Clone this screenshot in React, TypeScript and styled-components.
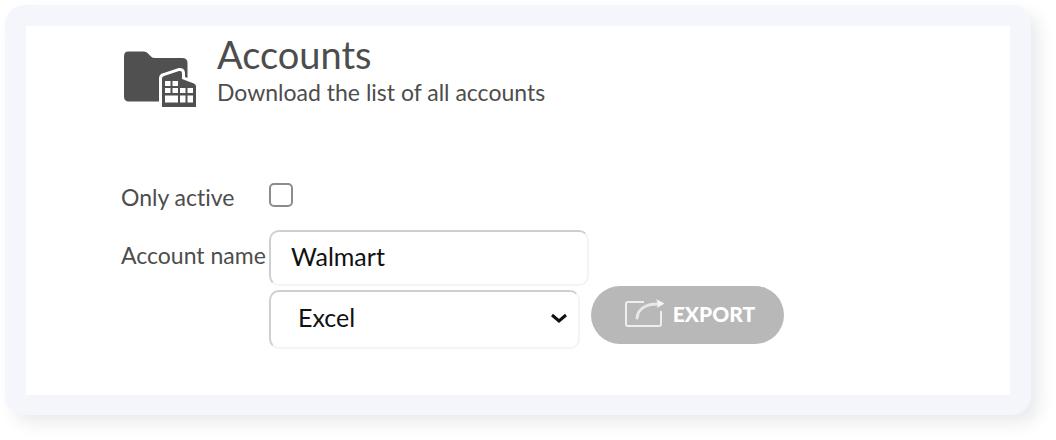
import React from "react";
import styled, { createGlobalStyle } from "styled-components";

const GlobalStyle = createGlobalStyle`
  *, *::before, *::after { box-sizing: border-box; }
  body {
    margin: 0;
    background: #ffffff;
    color: #4d4d4d;
    font-family: Lato, "Open Sans", sans-serif;
    font-variant-ligatures: none;
  }
`;

const Page = styled.div`
  padding: 5px 25px 25px 5px;
`;

const Frame = styled.div`
  padding: 21px 21px 20px;
  border-radius: 20px;
  background: #f5f6fc;
  box-shadow: 8px 8px 16px rgba(40, 50, 70, 0.1);
`;

const Panel = styled.main`
  padding: 8px 95px 46px;
  background: #ffffff;
`;

const Header = styled.header`
  display: flex;
  align-items: flex-start;
  gap: 20px;
  padding-left: 2px;
`;

const FolderIcon = styled.svg`
  flex: none;
  width: 74px;
  height: 58px;
  margin-top: 17px;
`;

const Title = styled.h1`
  margin: 0 0 3px;
  font-size: 38px;
  line-height: 40px;
  font-weight: 400;
`;

const Subtitle = styled.p`
  margin: 0;
  font-size: 23px;
  line-height: 30px;
`;

const Form = styled.form`
  display: grid;
  grid-template-columns: 148px 1fr;
  row-gap: 4px;
  align-items: center;
  margin-top: 64px;
`;

const Label = styled.label`
  padding-bottom: 6px;
  font-size: 23px;
  line-height: 28px;
  white-space: nowrap;
`;

const CheckCell = styled.div`
  display: flex;
  align-items: center;
  height: 53px;
  padding-bottom: 9px;
`;

const Checkbox = styled.input`
  appearance: none;
  width: 24px;
  height: 24px;
  margin: 0;
  border: 2px solid #8c8c8c;
  border-radius: 5px;
  background: #ffffff;
  &:checked { background: #4d4d4d; }
`;

const TextInput = styled.input`
  width: 320px;
  max-width: 100%;
  height: 56px;
  padding: 0 20px 4px;
  border: 2px solid;
  border-color: #cfcfcf #f4f4f4 #f4f4f4 #cfcfcf;
  border-radius: 10px;
  background: #ffffff;
  color: #111111;
  font: 400 25px/30px Lato, sans-serif;
`;

const Actions = styled.div`
  grid-column: 2;
  display: flex;
  gap: 11px;
`;

const SelectWrap = styled.div`
  position: relative;
  width: 311px;
`;

const Select = styled.select`
  appearance: none;
  width: 100%;
  height: 59px;
  padding: 0 48px 5px 27px;
  border: 2px solid;
  border-color: #cfcfcf #f4f4f4 #f4f4f4 #cfcfcf;
  border-radius: 10px;
  background: #ffffff;
  color: #111111;
  font: 400 25px/30px Lato, sans-serif;
`;

const Chevron = styled.svg`
  position: absolute;
  right: 12px;
  top: 22px;
  width: 18px;
  height: 12px;
  pointer-events: none;
`;

const ExportButton = styled.button`
  display: flex;
  align-items: center;
  justify-content: center;
  gap: 8px;
  width: 193px;
  height: 58px;
  margin-top: -4px;
  padding: 0 0 2px 3px;
  border: 0;
  border-radius: 29px;
  background: #b8b8b8;
  color: #ffffff;
  font: 900 21px/24px Lato, sans-serif;
`;

const ShareIcon = styled.svg`
  flex: none;
  width: 42px;
  height: 30px;
`;

export default function App() {
  return (
    <>
      <GlobalStyle />
      <Page>
        <Frame>
          <Panel>
            <Header>
              <FolderIcon viewBox="0 0 74 58" aria-hidden="true">
                <path
                  d="M5 .5H21Q23 .5 24.500 2L28 5.500Q29.500 7 32 7H59Q64.500 7 64.500 12V40H40V50.500H6Q1 50.500 1 45.500V5.500Q1 .5 5 .5Z"
                  fill="#505050"
                />
                <path
                  d="M39 56V27.500Q39 25.500 41 25L56 20Q59 19.500 59 22V28L71 32.500Q73 33.500 73 35V56Z"
                  fill="#505050"
                  stroke="#ffffff"
                  strokeWidth="6"
                  strokeLinejoin="round"
                  paintOrder="stroke"
                />
                <path
                  d="M42 30h5.500v5H42zM49.500 30H55v5h-5.500zM42 37h5.500v5H42zM49.500 37H55v5h-5.500zM57 37h5.500v5H57zM64.500 37H70v5h-5.500zM42 44.500h13v7H42zM57 44.500h5.500v7H57zM64.500 44.500H70v7h-5.500z"
                  fill="#ffffff"
                />
              </FolderIcon>
              <div>
                <Title>Accounts</Title>
                <Subtitle>Download the list of all accounts</Subtitle>
              </div>
            </Header>
            <Form onSubmit={(event) => event.preventDefault()}>
              <Label htmlFor="only-active">Only active</Label>
              <CheckCell>
                <Checkbox id="only-active" type="checkbox" />
              </CheckCell>
              <Label htmlFor="account-name">Account name</Label>
              <TextInput id="account-name" type="text" defaultValue="Walmart" />
              <Actions>
                <SelectWrap>
                  <Select aria-label="File format" defaultValue="Excel">
                    <option>Excel</option>
                  </Select>
                  <Chevron viewBox="0 0 18 12" aria-hidden="true">
                    <path
                      d="M2 3L9 9L16 3"
                      fill="none"
                      stroke="#111111"
                      strokeWidth="3"
                    />
                  </Chevron>
                </SelectWrap>
                <ExportButton type="submit">
                  <ShareIcon viewBox="0 0 42 30" aria-hidden="true">
                    <path
                      d="M21 3H5Q3 3 3 5V25Q3 27 5 27H36Q38 27 38 25V12"
                      fill="none"
                      stroke="#eeeeee"
                      strokeWidth="2"
                    />
                    <path
                      d="M14 19C15 9 24 5 35 5"
                      fill="none"
                      stroke="#e8e8e8"
                      strokeWidth="3"
                      strokeLinecap="round"
                    />
                    <path d="M33 0L41.500 4.500L34 9Q36 5 33 0Z" fill="#f4f4f4" />
                  </ShareIcon>
                  EXPORT
                </ExportButton>
              </Actions>
            </Form>
          </Panel>
        </Frame>
      </Page>
    </>
  );
}
